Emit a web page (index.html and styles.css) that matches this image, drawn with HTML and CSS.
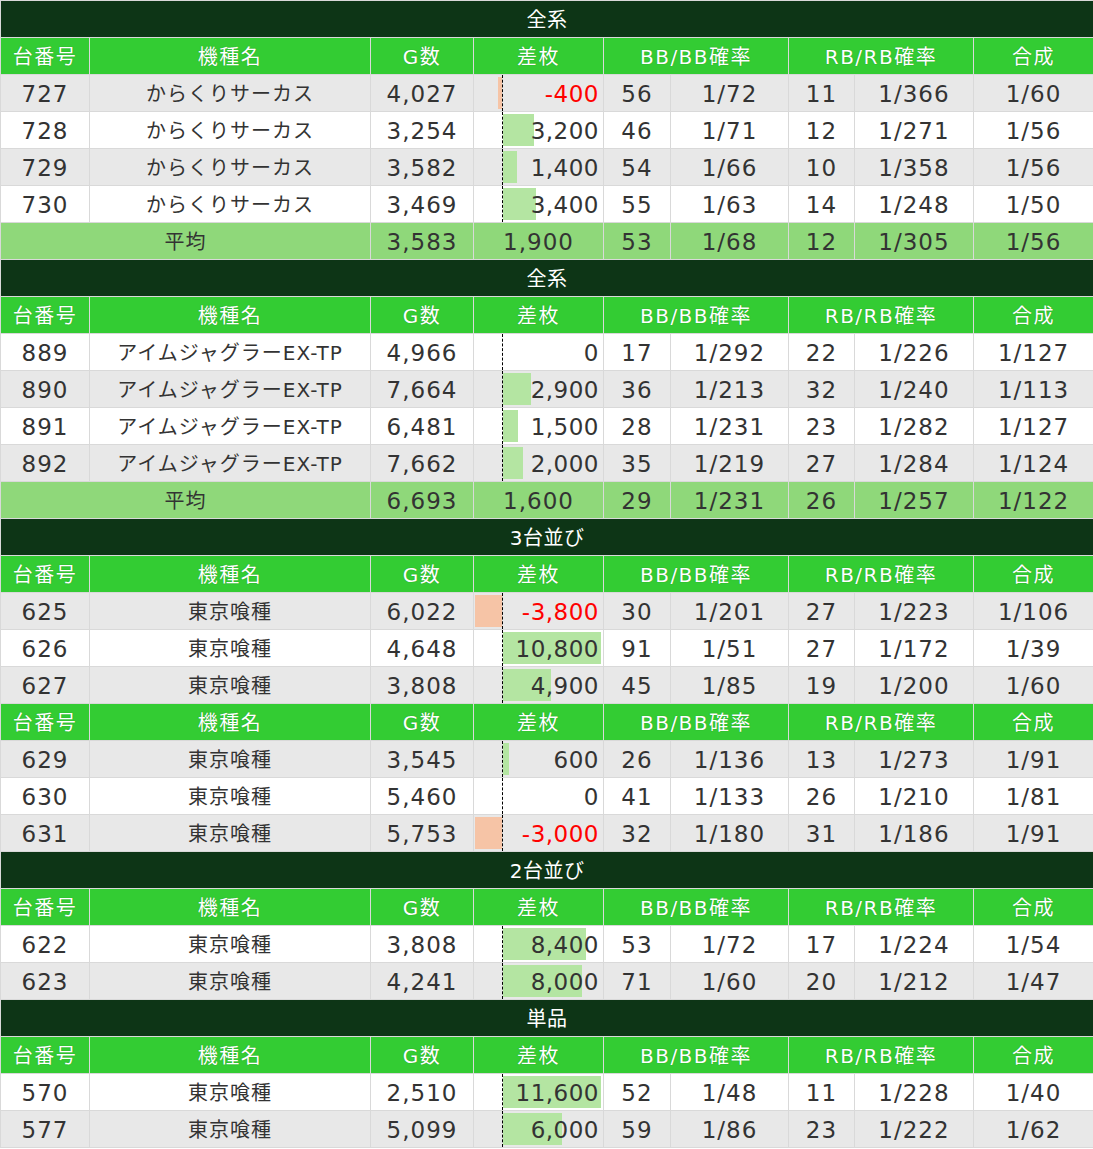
FILE: index.html
```html
<!DOCTYPE html>
<html lang="ja">
<head>
<meta charset="utf-8">
<title>データ</title>
<link rel="stylesheet" href="styles.css">
</head>
<body>
<table class="data">
<colgroup>
<col class="c1"><col class="c2"><col class="c3"><col class="c4"><col class="c5"><col class="c6"><col class="c7"><col class="c8"><col class="c9">
</colgroup>
<tbody>
<tr class="title"><td colspan="9">全系</td></tr>
<tr class="head"><td>台番号</td><td>機種名</td><td>G数</td><td>差枚</td><td colspan="2">BB/BB確率</td><td colspan="2">RB/RB確率</td><td>合成</td></tr>
<tr class="odd"><td>727</td><td class="name">からくりサーカス</td><td>4,027</td><td class="diff"><div class="track"><div class="neg"><i style="width:4px"></i></div><div class="pos"></div></div><span class="val minus">-400</span></td><td>56</td><td>1/72</td><td>11</td><td>1/366</td><td>1/60</td></tr>
<tr class="even"><td>728</td><td class="name">からくりサーカス</td><td>3,254</td><td class="diff"><div class="track"><div class="neg"></div><div class="pos"><i style="width:31px"></i></div></div><span class="val">3,200</span></td><td>46</td><td>1/71</td><td>12</td><td>1/271</td><td>1/56</td></tr>
<tr class="odd"><td>729</td><td class="name">からくりサーカス</td><td>3,582</td><td class="diff"><div class="track"><div class="neg"></div><div class="pos"><i style="width:14px"></i></div></div><span class="val">1,400</span></td><td>54</td><td>1/66</td><td>10</td><td>1/358</td><td>1/56</td></tr>
<tr class="even"><td>730</td><td class="name">からくりサーカス</td><td>3,469</td><td class="diff"><div class="track"><div class="neg"></div><div class="pos"><i style="width:33px"></i></div></div><span class="val">3,400</span></td><td>55</td><td>1/63</td><td>14</td><td>1/248</td><td>1/50</td></tr>
<tr class="avg"><td colspan="2" class="name">平均</td><td>3,583</td><td>1,900</td><td>53</td><td>1/68</td><td>12</td><td>1/305</td><td>1/56</td></tr>

<tr class="title"><td colspan="9">全系</td></tr>
<tr class="head"><td>台番号</td><td>機種名</td><td>G数</td><td>差枚</td><td colspan="2">BB/BB確率</td><td colspan="2">RB/RB確率</td><td>合成</td></tr>
<tr class="even"><td>889</td><td class="name">アイムジャグラーEX-TP</td><td>4,966</td><td class="diff"><div class="track"><div class="neg"></div><div class="pos"></div></div><span class="val">0</span></td><td>17</td><td>1/292</td><td>22</td><td>1/226</td><td>1/127</td></tr>
<tr class="odd"><td>890</td><td class="name">アイムジャグラーEX-TP</td><td>7,664</td><td class="diff"><div class="track"><div class="neg"></div><div class="pos"><i style="width:28px"></i></div></div><span class="val">2,900</span></td><td>36</td><td>1/213</td><td>32</td><td>1/240</td><td>1/113</td></tr>
<tr class="even"><td>891</td><td class="name">アイムジャグラーEX-TP</td><td>6,481</td><td class="diff"><div class="track"><div class="neg"></div><div class="pos"><i style="width:15px"></i></div></div><span class="val">1,500</span></td><td>28</td><td>1/231</td><td>23</td><td>1/282</td><td>1/127</td></tr>
<tr class="odd"><td>892</td><td class="name">アイムジャグラーEX-TP</td><td>7,662</td><td class="diff"><div class="track"><div class="neg"></div><div class="pos"><i style="width:20px"></i></div></div><span class="val">2,000</span></td><td>35</td><td>1/219</td><td>27</td><td>1/284</td><td>1/124</td></tr>
<tr class="avg"><td colspan="2" class="name">平均</td><td>6,693</td><td>1,600</td><td>29</td><td>1/231</td><td>26</td><td>1/257</td><td>1/122</td></tr>

<tr class="title"><td colspan="9">3台並び</td></tr>
<tr class="head"><td>台番号</td><td>機種名</td><td>G数</td><td>差枚</td><td colspan="2">BB/BB確率</td><td colspan="2">RB/RB確率</td><td>合成</td></tr>
<tr class="odd"><td>625</td><td class="name">東京喰種</td><td>6,022</td><td class="diff"><div class="track"><div class="neg"><i style="width:28px"></i></div><div class="pos"></div></div><span class="val minus">-3,800</span></td><td>30</td><td>1/201</td><td>27</td><td>1/223</td><td>1/106</td></tr>
<tr class="even"><td>626</td><td class="name">東京喰種</td><td>4,648</td><td class="diff"><div class="track"><div class="neg"></div><div class="pos"><i style="width:98px"></i></div></div><span class="val">10,800</span></td><td>91</td><td>1/51</td><td>27</td><td>1/172</td><td>1/39</td></tr>
<tr class="odd"><td>627</td><td class="name">東京喰種</td><td>3,808</td><td class="diff"><div class="track"><div class="neg"></div><div class="pos"><i style="width:48px"></i></div></div><span class="val">4,900</span></td><td>45</td><td>1/85</td><td>19</td><td>1/200</td><td>1/60</td></tr>
<tr class="head"><td>台番号</td><td>機種名</td><td>G数</td><td>差枚</td><td colspan="2">BB/BB確率</td><td colspan="2">RB/RB確率</td><td>合成</td></tr>
<tr class="odd"><td>629</td><td class="name">東京喰種</td><td>3,545</td><td class="diff"><div class="track"><div class="neg"></div><div class="pos"><i style="width:6px"></i></div></div><span class="val">600</span></td><td>26</td><td>1/136</td><td>13</td><td>1/273</td><td>1/91</td></tr>
<tr class="even"><td>630</td><td class="name">東京喰種</td><td>5,460</td><td class="diff"><div class="track"><div class="neg"></div><div class="pos"></div></div><span class="val">0</span></td><td>41</td><td>1/133</td><td>26</td><td>1/210</td><td>1/81</td></tr>
<tr class="odd"><td>631</td><td class="name">東京喰種</td><td>5,753</td><td class="diff"><div class="track"><div class="neg"><i style="width:28px"></i></div><div class="pos"></div></div><span class="val minus">-3,000</span></td><td>32</td><td>1/180</td><td>31</td><td>1/186</td><td>1/91</td></tr>

<tr class="title"><td colspan="9">2台並び</td></tr>
<tr class="head"><td>台番号</td><td>機種名</td><td>G数</td><td>差枚</td><td colspan="2">BB/BB確率</td><td colspan="2">RB/RB確率</td><td>合成</td></tr>
<tr class="even"><td>622</td><td class="name">東京喰種</td><td>3,808</td><td class="diff"><div class="track"><div class="neg"></div><div class="pos"><i style="width:83px"></i></div></div><span class="val">8,400</span></td><td>53</td><td>1/72</td><td>17</td><td>1/224</td><td>1/54</td></tr>
<tr class="odd"><td>623</td><td class="name">東京喰種</td><td>4,241</td><td class="diff"><div class="track"><div class="neg"></div><div class="pos"><i style="width:79px"></i></div></div><span class="val">8,000</span></td><td>71</td><td>1/60</td><td>20</td><td>1/212</td><td>1/47</td></tr>

<tr class="title"><td colspan="9">単品</td></tr>
<tr class="head"><td>台番号</td><td>機種名</td><td>G数</td><td>差枚</td><td colspan="2">BB/BB確率</td><td colspan="2">RB/RB確率</td><td>合成</td></tr>
<tr class="even"><td>570</td><td class="name">東京喰種</td><td>2,510</td><td class="diff"><div class="track"><div class="neg"></div><div class="pos"><i style="width:98px"></i></div></div><span class="val">11,600</span></td><td>52</td><td>1/48</td><td>11</td><td>1/228</td><td>1/40</td></tr>
<tr class="odd"><td>577</td><td class="name">東京喰種</td><td>5,099</td><td class="diff"><div class="track"><div class="neg"></div><div class="pos"><i style="width:59px"></i></div></div><span class="val">6,000</span></td><td>59</td><td>1/86</td><td>23</td><td>1/222</td><td>1/62</td></tr>
</tbody>
</table>
</body>
</html>
```
FILE: styles.css
```css
html, body {
  margin: 0;
  padding: 0;
  background: #ffffff;
}

.data {
  width: 1093px;
  border-collapse: collapse;
  table-layout: fixed;
  font-family: "DejaVu Sans", "Noto Sans CJK JP", sans-serif;
  font-size: 23px;
  letter-spacing: 1px;
  color: #333333;
}

.c1 { width: 89px; }
.c2 { width: 281px; }
.c3 { width: 103px; }
.c4 { width: 130px; }
.c5 { width: 67px; }
.c6 { width: 118px; }
.c7 { width: 66px; }
.c8 { width: 119px; }
.c9 { width: 120px; }

.data td {
  height: 37px;
  padding: 2px 0 0;
  box-sizing: border-box;
  border: 1px solid #d9d9d9;
  text-align: center;
  vertical-align: middle;
  white-space: nowrap;
  line-height: 1;
}

.title td {
  background: #0d3516;
  color: #ffffff;
  font-family: "DejaVu Sans", "Noto Sans CJK JP", sans-serif;
  font-size: 20px;
  letter-spacing: 0.5px;
}

.head td {
  background: #33cc33;
  color: #ffffff;
  font-family: "DejaVu Sans", "Noto Sans CJK JP", sans-serif;
  font-size: 20px;
  letter-spacing: 1.5px;
  text-shadow: 0 0 1px rgba(0, 90, 0, 0.5);
}

.odd td { background: #e8e8e8; }
.even td { background: #ffffff; }
.avg td { background: #8fd87a; }

.data td.name {
  font-family: "DejaVu Sans", "Noto Sans CJK JP", sans-serif;
  font-size: 20px;
  letter-spacing: 1px;
}

.data td.diff {
  position: relative;
  text-align: right;
  padding-right: 4px;
}

.track {
  position: absolute;
  top: 0;
  bottom: 0;
  left: 1px;
  right: 1px;
  display: grid;
  grid-template-columns: 28px 98px;
}

.neg {
  display: flex;
  justify-content: flex-end;
  padding: 2px 0;
  border-right: 1px dashed #000000;
}

.pos {
  display: flex;
  justify-content: flex-start;
  padding: 2px 0;
}

.neg i {
  display: block;
  background: #f6c4a6;
}

.pos i {
  display: block;
  background: #b4e5a2;
}

.val {
  position: relative;
  letter-spacing: 0.5px;
}

.minus { color: #ff0000; }
```
